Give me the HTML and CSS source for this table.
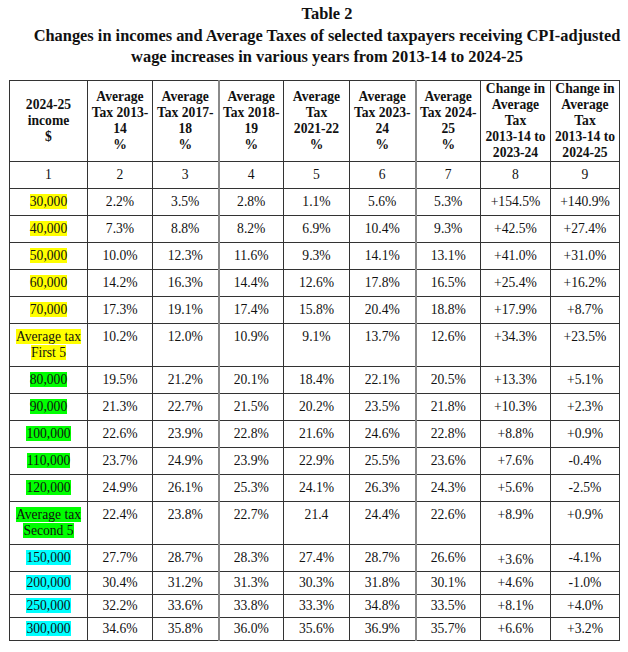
FILE: index.html
```html
<!DOCTYPE html>
<html>
<head>
<meta charset="utf-8">
<link rel="stylesheet" href="styles.css">
</head>
<body>
<div class="page">
  <div class="title">
    <div>Table 2</div>
    <div>Changes in incomes and Average Taxes of selected taxpayers receiving CPI-adjusted</div>
    <div>wage increases in various years from 2013-14 to 2024-25</div>
  </div>
  <table class="tax">
    <colgroup>
      <col class="c1"><col class="c2"><col class="c3"><col class="c4"><col class="c5"><col class="c6"><col class="c7"><col class="c8"><col class="c9">
    </colgroup>
    <thead>
      <tr>
        <th>2024-25<br>income<br>$</th>
        <th>Average<br>Tax 2013-<br>14<br>%</th>
        <th>Average<br>Tax 2017-<br>18<br>%</th>
        <th class="sep">Average<br>Tax 2018-<br>19<br>%</th>
        <th>Average<br>Tax<br>2021-22<br>%</th>
        <th>Average<br>Tax 2023-<br>24<br>%</th>
        <th class="sep">Average<br>Tax 2024-<br>25<br>%</th>
        <th>Change in<br>Average<br>Tax<br>2013-14 to<br>2023-24</th>
        <th>Change in<br>Average<br>Tax<br>2013-14 to<br>2024-25</th>
      </tr>
    </thead>
    <tbody>
      <tr><td>1</td><td>2</td><td>3</td><td class="sep">4</td><td>5</td><td>6</td><td class="sep">7</td><td>8</td><td>9</td></tr>
      <tr><td><span class="hl-y">30,000</span></td><td>2.2%</td><td>3.5%</td><td class="sep">2.8%</td><td>1.1%</td><td>5.6%</td><td class="sep">5.3%</td><td>+154.5%</td><td>+140.9%</td></tr>
      <tr><td><span class="hl-y">40,000</span></td><td>7.3%</td><td>8.8%</td><td class="sep">8.2%</td><td>6.9%</td><td>10.4%</td><td class="sep">9.3%</td><td>+42.5%</td><td>+27.4%</td></tr>
      <tr><td><span class="hl-y">50,000</span></td><td>10.0%</td><td>12.3%</td><td class="sep">11.6%</td><td>9.3%</td><td>14.1%</td><td class="sep">13.1%</td><td>+41.0%</td><td>+31.0%</td></tr>
      <tr><td><span class="hl-y">60,000</span></td><td>14.2%</td><td>16.3%</td><td class="sep">14.4%</td><td>12.6%</td><td>17.8%</td><td class="sep">16.5%</td><td>+25.4%</td><td>+16.2%</td></tr>
      <tr><td><span class="hl-y">70,000</span></td><td>17.3%</td><td>19.1%</td><td class="sep">17.4%</td><td>15.8%</td><td>20.4%</td><td class="sep">18.8%</td><td>+17.9%</td><td>+8.7%</td></tr>
      <tr><td><span class="hl-y">Average tax</span><br><span class="hl-y">First 5</span></td><td>10.2%</td><td>12.0%</td><td class="sep">10.9%</td><td>9.1%</td><td>13.7%</td><td class="sep">12.6%</td><td>+34.3%</td><td>+23.5%</td></tr>
      <tr><td><span class="hl-g">80,000</span></td><td>19.5%</td><td>21.2%</td><td class="sep">20.1%</td><td>18.4%</td><td>22.1%</td><td class="sep">20.5%</td><td>+13.3%</td><td>+5.1%</td></tr>
      <tr><td><span class="hl-g">90,000</span></td><td>21.3%</td><td>22.7%</td><td class="sep">21.5%</td><td>20.2%</td><td>23.5%</td><td class="sep">21.8%</td><td>+10.3%</td><td>+2.3%</td></tr>
      <tr><td><span class="hl-g">100,000</span></td><td>22.6%</td><td>23.9%</td><td class="sep">22.8%</td><td>21.6%</td><td>24.6%</td><td class="sep">22.8%</td><td>+8.8%</td><td>+0.9%</td></tr>
      <tr><td><span class="hl-g">110,000</span></td><td>23.7%</td><td>24.9%</td><td class="sep">23.9%</td><td>22.9%</td><td>25.5%</td><td class="sep">23.6%</td><td>+7.6%</td><td>-0.4%</td></tr>
      <tr><td><span class="hl-g">120,000</span></td><td>24.9%</td><td>26.1%</td><td class="sep">25.3%</td><td>24.1%</td><td>26.3%</td><td class="sep">24.3%</td><td>+5.6%</td><td>-2.5%</td></tr>
      <tr><td><span class="hl-g">Average tax</span><br><span class="hl-g">Second 5</span></td><td>22.4%</td><td>23.8%</td><td class="sep">22.7%</td><td>21.4</td><td>24.4%</td><td class="sep">22.6%</td><td>+8.9%</td><td>+0.9%</td></tr>
      <tr><td><span class="hl-c">150,000</span></td><td>27.7%</td><td>28.7%</td><td class="sep">28.3%</td><td>27.4%</td><td>28.7%</td><td class="sep">26.6%</td><td class="low">+3.6%</td><td>-4.1%</td></tr>
      <tr class="tight"><td><span class="hl-c">200,000</span></td><td>30.4%</td><td>31.2%</td><td class="sep">31.3%</td><td>30.3%</td><td>31.8%</td><td class="sep">30.1%</td><td>+4.6%</td><td>-1.0%</td></tr>
      <tr class="tight"><td><span class="hl-c">250,000</span></td><td>32.2%</td><td>33.6%</td><td class="sep">33.8%</td><td>33.3%</td><td>34.8%</td><td class="sep">33.5%</td><td>+8.1%</td><td>+4.0%</td></tr>
      <tr class="tight"><td><span class="hl-c">300,000</span></td><td>34.6%</td><td>35.8%</td><td class="sep">36.0%</td><td>35.6%</td><td>36.9%</td><td class="sep">35.7%</td><td>+6.6%</td><td>+3.2%</td></tr>
    </tbody>
  </table>
</div>
</body>
</html>
```

FILE: styles.css
```css
html, body {
  margin: 0;
  padding: 0;
  background: #ffffff;
}

body {
  font-family: "Liberation Serif", "Times New Roman", serif;
  color: #111;
}

.page {
  padding: 3px 0 0 9px;
}

.title {
  padding-left: 17px;
  text-align: center;
  font-weight: bold;
  font-size: 16.4px;
  line-height: 21.7px;
  margin-bottom: 12px;
}

.tax {
  border-collapse: collapse;
  table-layout: fixed;
  width: 610px;
  font-size: 13.6px;
  line-height: 16px;
  border: 1px solid #222;
}

.c1 { width: 78px; }
.c2 { width: 65px; }
.c3 { width: 66px; }
.c4 { width: 65px; }
.c5 { width: 66px; }
.c6 { width: 66px; }
.c7 { width: 65px; }
.c8 { width: 70px; }
.c9 { width: 69px; }

.tax th,
.tax td {
  border: 1px solid #333;
  text-align: center;
  padding: 0 1px;
}

.tax th.sep,
.tax td.sep {
  border-left: 2px solid #8a8a8a;
}

.tax th {
  font-weight: bold;
  vertical-align: middle;
  height: 80px;
}

.tax td {
  vertical-align: top;
  padding-top: 5px;
  padding-bottom: 5px;
  white-space: nowrap;
}

.tax tr.tight td {
  padding-top: 3px;
  padding-bottom: 3px;
}

.tax td.low {
  padding-top: 7px;
  padding-bottom: 3px;
}

.hl-y { background: #ffff00; }
.hl-g { background: #00ff00; }
.hl-c { background: #00ffff; }
```
